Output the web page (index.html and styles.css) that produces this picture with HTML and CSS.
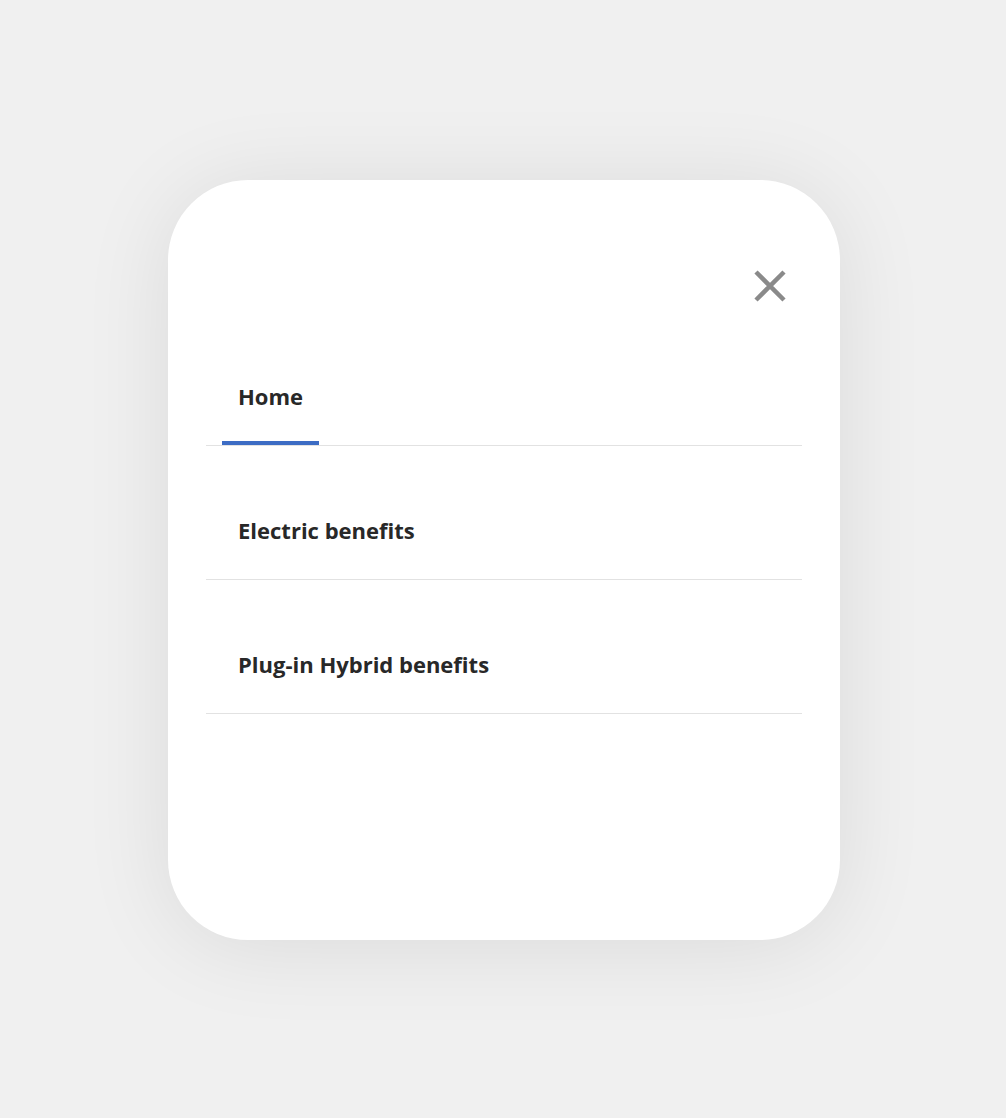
FILE: index.html
```html
<!DOCTYPE html>
<html lang="en">
<head>
    <meta charset="UTF-8">
    <meta name="viewport" content="width=device-width, initial-scale=1.0">
    <title>Menu</title>
    <link rel="stylesheet" href="styles.css">
</head>
<body>

    <!-- Menu card -->
    <div class="card">
        <div class="card-head">
            <button class="close" aria-label="Close">
                <svg width="32" height="32" viewBox="0 0 32 32">
                    <path d="M2 2 L30 30 M30 2 L2 30" stroke="#8a8a8a" stroke-width="4.5" fill="none"/>
                </svg>
            </button>
        </div>

        <ul class="menu">
            <li class="menu-item active">Home</li>
            <li class="menu-item">Electric benefits</li>
            <li class="menu-item">Plug-in Hybrid benefits</li>
        </ul>
    </div>

</body>
</html>
```

FILE: styles.css
```css
/* Basic reset */
* {
    margin: 0;
    padding: 0;
    box-sizing: border-box;
}

html {
    background: #f0f0f0;
}

body {
    min-height: 100vh;
    font-family: "Open Sans", Arial, sans-serif;
    color: #282828;
    padding: 180px 0 0 168px;
}

.card {
    width: 672px;
    height: 760px;
    background: #fff;
    border-radius: 80px;
    padding: 0 38px;
    box-shadow: 0 6px 90px rgba(0, 0, 0, 0.09);
}

.card-head {
    height: 132px;
    display: flex;
    justify-content: flex-end;
    align-items: flex-end;
    padding: 0 16px 10px 0;
}

.close {
    width: 32px;
    height: 32px;
    border: none;
    background: none;
    cursor: pointer;
}

.close svg {
    display: block;
}

.menu {
    list-style: none;
}

.menu-item {
    position: relative;
    height: 134px;
    padding: 69px 0 0 32px;
    font-size: 22px;
    line-height: 30px;
    font-weight: 700;
    border-bottom: 1px solid #e2e2e2;
}

/* Blue marker under the current item */
.menu-item.active::after {
    content: '';
    position: absolute;
    left: 16px;
    bottom: 0;
    width: 97px;
    height: 4px;
    background: #3c6cc4;
}
```
